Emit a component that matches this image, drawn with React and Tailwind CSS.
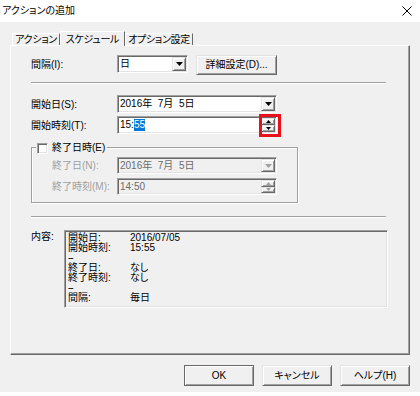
import React from 'react'

const sunken = 'border border-t-[#a0a0a0] border-l-[#a0a0a0] border-r-white border-b-white shadow-[inset_1px_1px_0_#696969,inset_-1px_-1px_0_#e3e3e3] p-[1px]'
const raised = 'border border-t-[#e3e3e3] border-l-[#e3e3e3] border-r-[#696969] border-b-[#696969] shadow-[inset_1px_1px_0_#ffffff,inset_-1px_-1px_0_#a0a0a0]'
const etched = 'h-[2px] border-t border-t-[#a0a0a0] border-b border-b-white'

function Arrow({ up, small, disabled }) {
  const fill = disabled ? '#a0a0a0' : '#000'
  if (small) {
    return (
      <svg width="5" height="3" viewBox="0 0 5 3">
        <polygon points={up ? '2.5,0 5,3 0,3' : '0,0 5,0 2.5,3'} fill={fill} />
      </svg>
    )
  }
  return (
    <svg width="7" height="4" viewBox="0 0 7 4">
      <polygon points="0,0 7,0 3.5,4" fill={fill} />
    </svg>
  )
}

function Combo({ className, text, disabled }) {
  return (
    <div className={`${sunken} ${className} flex ${disabled ? 'bg-[#f0f0f0] text-[#6d6d6d]' : 'bg-white'}`}>
      <div className="flex-1 pl-[1px] leading-[12px] flex items-center whitespace-pre">{text}</div>
      <div className={`${raised} w-[14px] bg-[#f0f0f0] flex items-center justify-center`}>
        <Arrow disabled={disabled} />
      </div>
    </div>
  )
}

function TimeField({ className, children, disabled, highlight }) {
  return (
    <div className={`${sunken} ${className} relative flex ${disabled ? 'bg-[#f0f0f0] text-[#6d6d6d]' : 'bg-white'}`}>
      <div className="flex-1 pl-[1px] leading-[12px] flex items-center">{children}</div>
      <div className="w-[14px] flex flex-col">
        <div className={`${raised} flex-1 bg-[#f0f0f0] flex items-center justify-center`}>
          <Arrow up small disabled={disabled} />
        </div>
        <div className={`${raised} flex-1 bg-[#f0f0f0] flex items-center justify-center`}>
          <Arrow small disabled={disabled} />
        </div>
      </div>
      {highlight && (
        <div className="absolute left-[141px] top-[-3px] w-[22px] h-[23px] border-[3px] border-[#e8101c]" />
      )}
    </div>
  )
}

function Button({ children, def }) {
  return (
    <div className={`w-[70px] h-[21px] bg-[#f0f0f0] flex items-center justify-center leading-[12px] ${def ? 'border border-[#696969] shadow-[inset_1px_1px_0_#ffffff,inset_-1px_-1px_0_#a0a0a0]' : raised}`}>
      {children}
    </div>
  )
}

export default function App() {
  return (
    <div className="w-[420px] h-[396px] bg-white overflow-hidden text-[10px] text-black font-['Liberation_Sans','Noto_Sans_CJK_JP',sans-serif] [font-feature-settings:'palt']">
      {/* title bar */}
      <div className="h-[22px] flex items-center justify-between pl-[2px] pr-[8px]">
        <span className="leading-[12px]">アクションの追加</span>
        <svg width="10" height="10" viewBox="0 0 10 10">
          <path d="M0.5 0.5 L9.5 9.5 M9.5 0.5 L0.5 9.5" stroke="#000" strokeWidth="1" />
        </svg>
      </div>

      <div className="h-[370px] bg-[#f0f0f0]">
        {/* tabs */}
        <div className="pt-[9px] pl-[12px] flex items-end whitespace-nowrap tracking-[-0.3px]">
          <div className="w-[48px] h-[12px] border-t border-l border-t-white border-l-white border-r border-r-[#696969] leading-[11px] text-center">アクション</div>
          <div className="relative z-10 w-[65px] h-[15px] -mb-px bg-[#f0f0f0] border-t border-l border-t-white border-l-white border-r border-r-[#696969] pt-[2px] leading-[11px] text-center">スケジュール</div>
          <div className="w-[68px] h-[12px] border-t border-l border-t-white border-l-white border-r border-r-[#696969] leading-[11px] text-center">オプション設定</div>
        </div>

        {/* panel */}
        <div className="ml-[10px] w-[400px] h-[310px] border-t border-l border-t-white border-l-white border-r border-b border-r-[#696969] border-b-[#696969] shadow-[inset_-1px_-1px_0_#a0a0a0] pl-[20px] pt-[9px]">
          <div className="flex items-start">
            <div className="w-[86px] h-[18px] flex items-center">間隔(I):</div>
            <Combo className="w-[71px] h-[18px]" text="日" />
            <div className={`${raised} ml-[8px] w-[81px] h-[20px] flex items-center justify-center leading-[12px]`}>詳細設定(D)...</div>
          </div>

          <div className={`${etched} mt-[7px] w-[355px]`} />

          <div className="mt-[11px] flex">
            <div className="w-[86px] h-[18px] flex items-center">開始日(S):</div>
            <Combo className="w-[160px] h-[18px]" text="2016年  7月  5日" />
          </div>
          <div className="mt-[3px] flex">
            <div className="w-[86px] h-[18px] flex items-center">開始時刻(T):</div>
            <TimeField className="w-[160px] h-[18px]" highlight>
              15:<span className="bg-[#0078d7] text-white">55</span>
            </TimeField>
          </div>

          {/* group box */}
          <div className="relative mt-[13px] w-[267px] h-[56px] border border-[#a0a0a0] shadow-[1px_1px_0_#ffffff,inset_1px_1px_0_#ffffff] pl-[20px] pt-[9px]">
            <div className="absolute left-[4px] top-[-6px] bg-[#f0f0f0] flex items-center gap-[4px] pl-[1px] pr-[2px]">
              <div className={`${sunken} w-[11px] h-[11px] bg-white`} />
              <span className="leading-[12px]">終了日時(E)</span>
            </div>
            <div className="flex text-[#a0a0a0]">
              <div className="w-[65px] h-[17px] flex items-center">終了日(N):</div>
              <Combo className="w-[160px] h-[17px]" text="2016年  7月  5日" disabled />
            </div>
            <div className="mt-[4px] flex text-[#a0a0a0]">
              <div className="w-[65px] h-[17px] flex items-center">終了時刻(M):</div>
              <TimeField className="w-[160px] h-[17px]" disabled>14:50</TimeField>
            </div>
          </div>

          <div className={`${etched} mt-[13px] w-[355px]`} />

          <div className="mt-[12px] flex">
            <div className="w-[33px] pt-[1px] leading-[12px]">内容:</div>
            <div className={`${sunken} w-[324px] h-[78px] pl-[3px] pt-[2px]`}>
              <div className="grid grid-cols-[62px_1fr] leading-[10px]">
                <span>開始日:</span><span>2016/07/05</span>
                <span>開始時刻:</span><span>15:55</span>
                <span className="tracking-[-1px]">--</span><span />
                <span>終了日:</span><span>なし</span>
                <span>終了時刻:</span><span>なし</span>
                <span className="tracking-[-1px]">--</span><span />
                <span>間隔:</span><span>毎日</span>
              </div>
            </div>
          </div>
        </div>

        {/* buttons */}
        <div className="mt-[10px] pr-[10px] flex justify-end gap-[8px]">
          <Button def>OK</Button>
          <Button>キャンセル</Button>
          <Button>ヘルプ(H)</Button>
        </div>
      </div>
    </div>
  )
}
